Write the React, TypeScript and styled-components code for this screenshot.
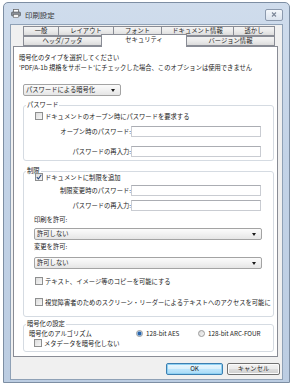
import React from 'react';
import styled, { createGlobalStyle } from 'styled-components';

const GlobalStyle = createGlobalStyle`
  html, body {
    margin: 0;
    padding: 0;
    background: #ffffff;
  }
  body {
    font-family: "Noto Sans CJK JP", "Noto Sans", sans-serif;
    font-size: 6.3px;
    color: #1c1c1c;
  }
`;

const Window = styled.div`
  box-sizing: border-box;
  width: 287px;
  height: 381px;
  margin: 2px 0 0 3px;
  border: 1px solid #7d8ea3;
  border-radius: 5px 5px 0 0;
  background: linear-gradient(180deg, #cfdcec 0%, #c3d3e7 40%, #bccde2 100%);
  padding: 0 6px 2px 6px;
  display: flex;
  flex-direction: column;
`;

const TitleBar = styled.div`
  height: 21px;
  display: flex;
  align-items: center;
  gap: 4px;
  padding-left: 1px;
`;

const Title = styled.span`
  font-size: 7.4px;
  color: #3a3a3a;
  flex: 1;
  margin-top: 1px;
`;

const CloseButton = styled.div`
  width: 16px;
  height: 10px;
  margin-top: 2px;
  border: 1px solid #8c9aae;
  border-radius: 2px;
  background: linear-gradient(180deg, #f4f7fb 0%, #dbe3ee 100%);
  display: flex;
  align-items: center;
  justify-content: center;
`;

const Client = styled.div`
  flex: 1;
  box-sizing: border-box;
  border: 1px solid #8fa1b6;
  background: #f0f0f0;
  padding: 2px 2px 0 2px;
  display: flex;
  flex-direction: column;
`;

const TabRow = styled.div`
  display: flex;
  margin-left: 10px;
  height: 9px;
  align-items: flex-end;
`;

const TabRowLower = styled(TabRow)`
  height: 10px;
  position: relative;
  z-index: 1;
`;

const Tab = styled.div<{ $w: number; $active?: boolean }>`
  box-sizing: border-box;
  width: ${p => p.$w}px;
  height: ${p => (p.$active ? 13 : 10)}px;
  margin-bottom: ${p => (p.$active ? -1 : 0)}px;
  margin-left: -1px;
  border: 1px solid #898c95;
  border-bottom: ${p => (p.$active ? 'none' : '1px solid #898c95')};
  background: ${p =>
    p.$active ? '#ffffff' : 'linear-gradient(180deg, #f3f3f3 0%, #ebebeb 50%, #dcdcdc 100%)'};
  display: flex;
  align-items: ${p => (p.$active ? 'flex-start' : 'center')};
  padding-top: ${p => (p.$active ? 1 : 0)}px;
  justify-content: center;
  line-height: 8px;
  white-space: nowrap;
  &:first-child {
    margin-left: 0;
  }
`;

const Panel = styled.div`
  box-sizing: border-box;
  margin-right: 2px;
  border: 1px solid #898c95;
  background: #ffffff;
  padding: 6px 5px 4px 9px;
  display: flex;
  flex-direction: column;
`;

const Intro = styled.div`
  margin-left: -4px;
  line-height: 10px;
  white-space: nowrap;
`;

const TypeSelect = styled.div`
  margin-top: 11px;
`;

const Combo = styled.div<{ $w: number }>`
  box-sizing: border-box;
  width: ${p => p.$w}px;
  height: 12px;
  border: 1px solid #a3a3a3;
  border-radius: 2px;
  background: linear-gradient(180deg, #fbfbfb 0%, #f1f1f1 50%, #e5e5e5 100%);
  display: flex;
  align-items: center;
  justify-content: space-between;
  padding: 0 5px 0 2px;
  line-height: 10px;
`;

const Arrow = styled.span`
  width: 0;
  height: 0;
  border-left: 2.5px solid transparent;
  border-right: 2.5px solid transparent;
  border-top: 3px solid #1a1a1a;
`;

const Group = styled.fieldset<{ $top: number; $pb: number }>`
  box-sizing: border-box;
  width: 251px;
  margin: ${p => p.$top}px 0 0 0;
  padding: 0 0 ${p => p.$pb}px 0;
  border: 1px solid #d5dbe2;
  border-radius: 3px;
  display: flex;
  flex-direction: column;
  min-width: 0;
`;

const Legend = styled.legend`
  padding: 0 1px;
  margin-left: 2px;
  line-height: 8px;
  font-size: 6.3px;
`;

const CheckRow = styled.label<{ $top: number; $left?: number }>`
  display: flex;
  align-items: center;
  gap: 2px;
  height: 10px;
  margin: ${p => p.$top}px 0 0 ${p => p.$left ?? 11}px;
  white-space: nowrap;
  overflow: hidden;
`;

const Box = styled.span`
  box-sizing: border-box;
  flex: none;
  width: 8px;
  height: 8px;
  border: 1px solid #8e8f8f;
  background: linear-gradient(135deg, #dcdcdc 0%, #f6f6f6 100%);
  display: flex;
  align-items: center;
  justify-content: center;
`;

const FieldRow = styled.div<{ $top: number }>`
  display: flex;
  align-items: center;
  height: 11px;
  margin-top: ${p => p.$top}px;
`;

const FieldLabel = styled.span`
  width: 107px;
  text-align: right;
  white-space: nowrap;
`;

const TextBox = styled.div`
  box-sizing: border-box;
  width: 130px;
  height: 11px;
  border: 1px solid #c9ccd2;
  border-top-color: #abadb3;
  background: #ffffff;
`;

const SubLabel = styled.div<{ $top: number }>`
  margin: ${p => p.$top}px 0 0 10px;
  line-height: 10px;
`;

const Indented = styled.div<{ $top: number }>`
  margin: ${p => p.$top}px 0 0 10px;
`;

const AlgoRow = styled.div`
  display: flex;
  align-items: center;
  height: 10px;
  margin-left: 5px;
`;

const AlgoLabel = styled.span`
  width: 107px;
`;

const RadioItem = styled.span<{ $w: number }>`
  display: flex;
  align-items: center;
  gap: 3px;
  width: ${p => p.$w}px;
  white-space: nowrap;
`;

const Radio = styled.span<{ $on?: boolean }>`
  box-sizing: border-box;
  width: 7px;
  height: 7px;
  border-radius: 50%;
  border: 1px solid #9a9a9a;
  background: ${p =>
    p.$on
      ? 'radial-gradient(circle, #2b63a8 0 1.6px, #7fb1e3 2px, #eef3f8 3px)'
      : 'linear-gradient(135deg, #d8d8d8 0%, #f6f6f6 100%)'};
`;

const ButtonRow = styled.div`
  display: flex;
  justify-content: flex-end;
  gap: 4px;
  margin-top: 6px;
`;

const Button = styled.div<{ $w: number; $default?: boolean }>`
  box-sizing: border-box;
  width: ${p => p.$w}px;
  height: 12px;
  border: 1px solid ${p => (p.$default ? '#3c7fb1' : '#707070')};
  border-radius: 2px;
  background: ${p =>
    p.$default
      ? 'linear-gradient(180deg, #eaf6fd 0%, #d9f0fc 50%, #bee6fd 51%, #a7d9f5 100%)'
      : 'linear-gradient(180deg, #f2f2f2 0%, #ebebeb 50%, #dddddd 51%, #cfcfcf 100%)'};
  box-shadow: ${p => (p.$default ? 'inset 0 0 0 1px #8fd1f3' : 'inset 0 0 0 1px #fbfbfb')};
  display: flex;
  align-items: center;
  justify-content: center;
  line-height: 10px;
`;

const PrinterIcon = () => (
  <svg width="10" height="9" viewBox="0 0 10 9">
    <rect x="2.5" y="0.5" width="5" height="3" fill="#fff" stroke="#6b6b6b" strokeWidth="0.8" />
    <rect x="0.5" y="3" width="9" height="4" rx="1" fill="#8a8f96" stroke="#4d5258" strokeWidth="0.6" />
    <rect x="2.5" y="5.5" width="5" height="3" fill="#f4f4f4" stroke="#6b6b6b" strokeWidth="0.6" />
  </svg>
);

const CloseGlyph = () => (
  <svg width="6" height="5" viewBox="0 0 6 5">
    <path d="M1 0.5 L5 4.5 M5 0.5 L1 4.5" stroke="#7b8597" strokeWidth="1.1" />
  </svg>
);

const Tick = () => (
  <svg width="6" height="6" viewBox="0 0 6 6">
    <path d="M0.8 3.2 L2.4 4.8 L5.3 0.8" fill="none" stroke="#2b4a7e" strokeWidth="1.1" />
  </svg>
);

const CheckBox = ({ checked }: { checked?: boolean }) => <Box>{checked && <Tick />}</Box>;

const topTabs: [string, number][] = [
  ['一般', 36],
  ['レイアウト', 56],
  ['フォント', 49],
  ['ドキュメント情報', 73],
  ['透かし', 42],
];

const bottomTabs: [string, number, boolean][] = [
  ['ヘッダ/フッタ', 79, false],
  ['セキュリティ', 86, true],
  ['バージョン情報', 89, false],
];

export default function App() {
  return (
    <>
      <GlobalStyle />
      <Window>
        <TitleBar>
          <PrinterIcon />
          <Title>印刷設定</Title>
          <CloseButton>
            <CloseGlyph />
          </CloseButton>
        </TitleBar>
        <Client>
          <TabRow>
            {topTabs.map(([label, w]) => (
              <Tab key={label} $w={w}>
                {label}
              </Tab>
            ))}
          </TabRow>
          <TabRowLower>
            {bottomTabs.map(([label, w, active]) => (
              <Tab key={label} $w={w} $active={active}>
                {label}
              </Tab>
            ))}
          </TabRowLower>
          <Panel>
            <Intro>暗号化のタイプを選択してください</Intro>
            <Intro>'PDF/A-1b 規格をサポート'にチェックした場合、このオプションは使用できません</Intro>
            <TypeSelect>
              <Combo $w={98}>
                <span>パスワードによる暗号化</span>
                <Arrow />
              </Combo>
            </TypeSelect>

            <Group $top={5} $pb={3}>
              <Legend>パスワード</Legend>
              <CheckRow $top={2}>
                <CheckBox />
                <span>ドキュメントのオープン時にパスワードを要求する</span>
              </CheckRow>
              <FieldRow $top={5}>
                <FieldLabel>オープン時のパスワード:</FieldLabel>
                <TextBox />
              </FieldRow>
              <FieldRow $top={9}>
                <FieldLabel>パスワードの再入力:</FieldLabel>
                <TextBox />
              </FieldRow>
            </Group>

            <Group $top={6} $pb={9}>
              <Legend>制限</Legend>
              <CheckRow $top={-3}>
                <CheckBox checked />
                <span>ドキュメントに制限を追加</span>
              </CheckRow>
              <FieldRow $top={3}>
                <FieldLabel>制限変更時のパスワード:</FieldLabel>
                <TextBox />
              </FieldRow>
              <FieldRow $top={4}>
                <FieldLabel>パスワードの再入力:</FieldLabel>
                <TextBox />
              </FieldRow>
              <SubLabel $top={4}>印刷を許可:</SubLabel>
              <Indented $top={3}>
                <Combo $w={228}>
                  <span>許可しない</span>
                  <Arrow />
                </Combo>
              </Indented>
              <SubLabel $top={2}>変更を許可:</SubLabel>
              <Indented $top={5}>
                <Combo $w={228}>
                  <span>許可しない</span>
                  <Arrow />
                </Combo>
              </Indented>
              <CheckRow $top={7}>
                <CheckBox />
                <span>テキスト、イメージ等のコピーを可能にする</span>
              </CheckRow>
              <CheckRow $top={11}>
                <CheckBox />
                <span>視覚障害者のためのスクリーン・リーダーによるテキストへのアクセスを可能に</span>
              </CheckRow>
            </Group>

            <Group $top={3} $pb={3}>
              <Legend>暗号化の設定</Legend>
              <AlgoRow>
                <AlgoLabel>暗号化のアルゴリズム</AlgoLabel>
                <RadioItem $w={62}>
                  <Radio $on />
                  <span>128-bit AES</span>
                </RadioItem>
                <RadioItem $w={75}>
                  <Radio />
                  <span>128-bit ARC-FOUR</span>
                </RadioItem>
              </AlgoRow>
              <CheckRow $top={0} $left={10}>
                <CheckBox />
                <span>メタデータを暗号化しない</span>
              </CheckRow>
            </Group>
          </Panel>
          <ButtonRow>
            <Button $w={57} $default>
              OK
            </Button>
            <Button $w={53}>キャンセル</Button>
          </ButtonRow>
        </Client>
      </Window>
    </>
  );
}
